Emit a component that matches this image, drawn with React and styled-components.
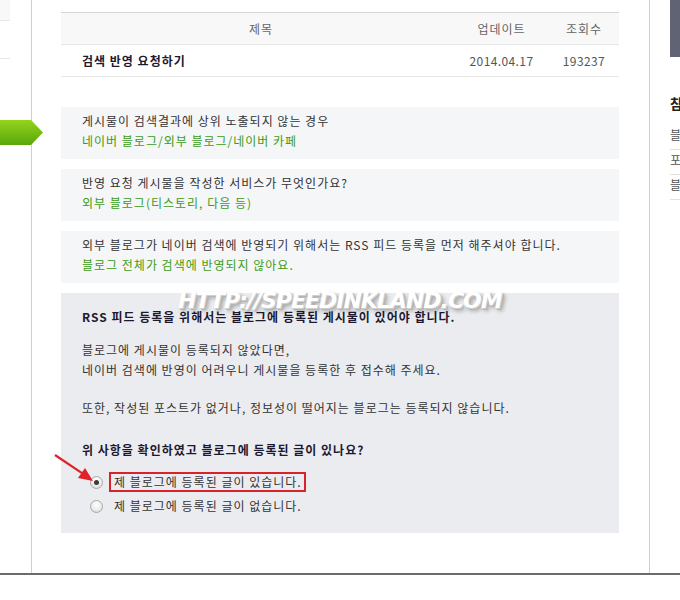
import React from "react";
import styled, { createGlobalStyle } from "styled-components";

const GlobalStyle = createGlobalStyle`
  html, body { margin: 0; padding: 0; background: #fff; overflow: hidden; }
  body { font-family: "Noto Sans CJK KR", "Noto Sans", sans-serif; font-size: 12px; letter-spacing: 1px; color: #333; }
  * { box-sizing: border-box; }
`;

const Page = styled.div`
  width: 680px;
  height: 575px;
  display: grid;
  grid-template-columns: 32px 617px 31px;
  border-bottom: 2px solid #6b6b6b;
  overflow: hidden;
`;

const Rail = styled.div`
  border-right: 1px solid #cfcfcf;
  display: flex;
  flex-direction: column;
  align-items: flex-start;
`;

const RailStub = styled.div`
  width: 10px;
  height: 21px;
  background: #f8f8f8;
  border-bottom: 1px solid #e6e6e6;
`;

const RailLine = styled.div`
  width: 10px;
  margin-top: 37px;
  border-top: 1px solid #e6e6e6;
`;

const GreenArrow = styled.svg`
  display: block;
  flex: none;
  margin-top: 61px;
  width: 43px;
  height: 25px;
  position: relative;
  z-index: 1;
`;

const Main = styled.main`
  padding: 12px 30px 0 29px;
`;

const Table = styled.div`
  border-top: 1px solid #d6d6d6;
`;

const TableRow = styled.div`
  display: grid;
  grid-template-columns: 400px 81px 77px;
  height: 32px;
  align-items: center;
  border-bottom: 1px solid #e6e6e6;
  background: ${(p) => (p.$head ? "#f8f8f8" : "#fff")};
  color: ${(p) => (p.$head ? "#666" : "#555")};
`;

const Cell = styled.div`
  text-align: ${(p) => p.$align || "center"};
  padding-left: ${(p) => p.$pl || 0}px;
  font-weight: ${(p) => (p.$bold ? 700 : 400)};
  color: ${(p) => (p.$bold ? "#1e1a2e" : "inherit")};
  letter-spacing: ${(p) => (p.$num ? "0.4px" : "1px")};
  white-space: nowrap;
`;

const Boxes = styled.div`
  margin-top: 30px;
  display: flex;
  flex-direction: column;
  gap: 10px;
`;

const InfoBox = styled.div`
  background: #f5f6f8;
  padding: 4px 21px 8px;
  line-height: 20px;
  color: #333;
`;

const Answer = styled.div`
  color: #3c9c14;
`;

const Notice = styled.section`
  position: relative;
  background: #ebecef;
  padding: 14px 21px 15px;
  line-height: 20px;
  color: #333;
`;

const NoticeTitle = styled.div`
  font-weight: 700;
  color: #1c1830;
`;

const Para = styled.p`
  margin: ${(p) => p.$mt}px 0 0;
`;

const Question = styled.div`
  margin-top: 22px;
  font-weight: 700;
  color: #1c1830;
`;

const Options = styled.div`
  margin-top: 10px;
  display: flex;
  flex-direction: column;
`;

const OptionRow = styled.label`
  display: flex;
  align-items: center;
  height: 24px;
  padding-left: 8px;
`;

const Radio = styled.span`
  flex: none;
  width: 13px;
  height: 13px;
  border-radius: 50%;
  border: 1px solid #a8a8a8;
  background: radial-gradient(circle at 50% 35%, #ffffff 0%, #ececec 55%, #d2d2d2 100%);
  display: flex;
  align-items: center;
  justify-content: center;
  &::after {
    content: "";
    width: 5px;
    height: 5px;
    border-radius: 50%;
    background: #3b3b3b;
    display: ${(p) => (p.$checked ? "block" : "none")};
  }
`;

const OptionText = styled.span`
  margin-left: 6px;
  padding: 0 2px 0 3px;
  line-height: 16px;
  border: 2px solid ${(p) => (p.$marked ? "#d8232c" : "transparent")};
  color: #333;
  white-space: nowrap;
`;

const Watermark = styled.div`
  position: absolute;
  left: 117px;
  top: -4px;
  font-family: "DejaVu Sans", "Liberation Sans", sans-serif;
  font-weight: 700;
  font-style: oblique;
  font-size: 22px;
  line-height: 24px;
  letter-spacing: -1px;
  color: #fff;
  text-shadow: 1px 1px 0 #cfcfcf, 2px 2px 0 #b4b4b4, 3px 3px 4px rgba(0, 0, 0, 0.35);
  white-space: nowrap;
  pointer-events: none;
`;

const RedArrow = styled.svg`
  position: absolute;
  left: -10px;
  top: 155px;
  width: 50px;
  height: 40px;
  overflow: visible;
`;

const Side = styled.aside`
  border-left: 1px solid #cfcfcf;
  padding-left: 20px;
  overflow: hidden;
  white-space: nowrap;
`;

const SideBlock = styled.div`
  width: 10px;
  height: 57px;
  background: #606374;
`;

const SideTitle = styled.div`
  margin-top: 36px;
  font-size: 14px;
  font-weight: 700;
  line-height: 20px;
  color: #222;
`;

const SideList = styled.ul`
  list-style: none;
  margin: 12px 0 0;
  padding: 0;
`;

const SideItem = styled.li`
  line-height: 20px;
  padding-bottom: 4px;
  border-bottom: 1px solid #e2e2e2;
  color: #555;
`;

export default function App() {
  return (
    <>
      <GlobalStyle />
      <Page>
        <Rail>
          <RailStub />
          <RailLine />
          <GreenArrow viewBox="0 0 43 25">
            <defs>
              <linearGradient id="ga" x1="0" y1="0" x2="0" y2="1">
                <stop offset="0" stopColor="#93d41c" />
                <stop offset="1" stopColor="#5aa60a" />
              </linearGradient>
            </defs>
            <polygon points="0,0 31,0 43,12.5 31,25 0,25" fill="url(#ga)" />
          </GreenArrow>
        </Rail>

        <Main>
          <Table>
            <TableRow $head>
              <Cell>제목</Cell>
              <Cell>업데이트</Cell>
              <Cell $pl={7}>조회수</Cell>
            </TableRow>
            <TableRow>
              <Cell $align="left" $pl={21} $bold>검색 반영 요청하기</Cell>
              <Cell $num>2014.04.17</Cell>
              <Cell $num $pl={7}>193237</Cell>
            </TableRow>
          </Table>

          <Boxes>
            <InfoBox>
              <div>게시물이 검색결과에 상위 노출되지 않는 경우</div>
              <Answer>네이버 블로그/외부 블로그/네이버 카페</Answer>
            </InfoBox>
            <InfoBox>
              <div>반영 요청 게시물을 작성한 서비스가 무엇인가요?</div>
              <Answer>외부 블로그(티스토리, 다음 등)</Answer>
            </InfoBox>
            <InfoBox>
              <div>외부 블로그가 네이버 검색에 반영되기 위해서는 RSS 피드 등록을 먼저 해주셔야 합니다.</div>
              <Answer>블로그 전체가 검색에 반영되지 않아요.</Answer>
            </InfoBox>

            <Notice>
              <NoticeTitle>RSS 피드 등록을 위해서는 블로그에 등록된 게시물이 있어야 합니다.</NoticeTitle>
              <Para $mt={13}>
                블로그에 게시물이 등록되지 않았다면,
                <br />
                네이버 검색에 반영이 어려우니 게시물을 등록한 후 접수해 주세요.
              </Para>
              <Para $mt={18}>또한, 작성된 포스트가 없거나, 정보성이 떨어지는 블로그는 등록되지 않습니다.</Para>
              <Question>위 사항을 확인하였고 블로그에 등록된 글이 있나요?</Question>
              <Options>
                <OptionRow>
                  <Radio $checked />
                  <OptionText $marked>제 블로그에 등록된 글이 있습니다.</OptionText>
                </OptionRow>
                <OptionRow>
                  <Radio />
                  <OptionText>제 블로그에 등록된 글이 없습니다.</OptionText>
                </OptionRow>
              </Options>
              <RedArrow viewBox="0 0 50 40">
                <line x1="4" y1="7" x2="31" y2="25.2" stroke="#e0212b" strokeWidth="2.2" />
                <polygon points="42,33 27,30 34,20" fill="#e0212b" />
              </RedArrow>
              <Watermark>HTTP://SPEEDINKLAND.COM</Watermark>
            </Notice>
          </Boxes>
        </Main>

        <Side>
          <SideBlock />
          <SideTitle>참고하세요</SideTitle>
          <SideList>
            <SideItem>블로그 검색 등록</SideItem>
            <SideItem>포스트 검색 반영</SideItem>
            <SideItem>블로그 소유 확인</SideItem>
          </SideList>
        </Side>
      </Page>
    </>
  );
}
